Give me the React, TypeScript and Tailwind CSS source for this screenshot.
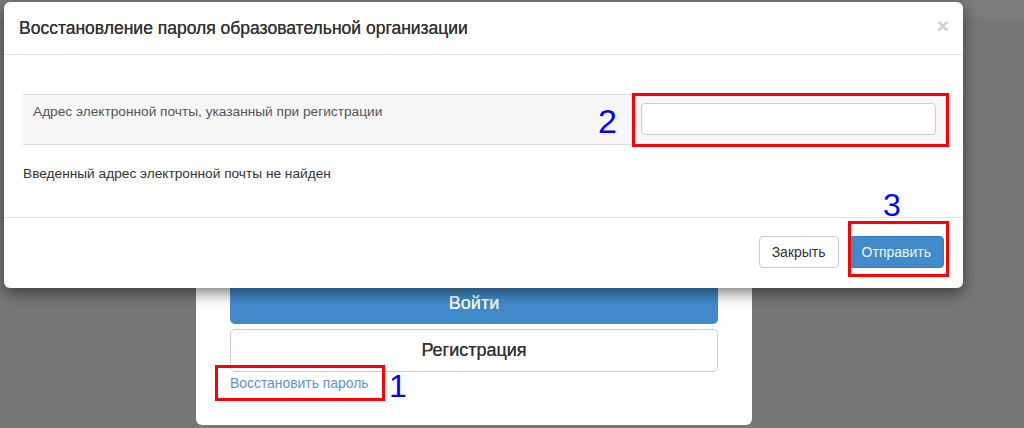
import React from "react";

const FONT = { fontFamily: '"Liberation Sans", Arial, sans-serif' };

function Annotation({ className }: { className: string }) {
  return <div className={`absolute border-[3px] border-[#ff0000] ${className}`} />;
}

function Digit({ n, className }: { n: string; className: string }) {
  return (
    <div className={`absolute leading-none text-[#0000ff] ${className}`}>{n}</div>
  );
}

function LoginCard() {
  return (
    <div className="w-[556px] rounded-[6px] bg-white pt-[83px] pb-[33px] px-[34px]">
      <button className="flex h-[42px] w-full items-center justify-center rounded-b-[5px] bg-[#428bca] text-[18px] text-white [text-shadow:0_0_0.6px_#fff]">
        Войти
      </button>
      <button className="mt-[5px] flex h-[43px] w-full items-center justify-center rounded-[5px] border border-[#ccc] bg-white text-[18px] text-[#333] [text-shadow:0_0_0.6px_#333]">
        Регистрация
      </button>
      <a className="mt-[2px] block text-[13.9px] leading-[18px] text-[#5b95d4]">
        Восстановить пароль
      </a>
    </div>
  );
}

function RecoveryModal() {
  return (
    <div className="absolute left-[4px] top-[2px] flex w-[959px] flex-col rounded-[6px] bg-white shadow-[0_5px_15px_rgba(0,0,0,0.5)]">
      {/* header */}
      <div className="flex h-[53px] items-center justify-between border-b border-[#e5e5e5] pl-[15px] pr-[14px]">
        <h4 className="text-[17.5px] text-[#333] [text-shadow:0_0_0.5px_#333]">
          Восстановление пароля образовательной организации
        </h4>
        <span className="-mt-[6px] text-[21px] font-bold leading-none text-[#cfcfcf]">×</span>
      </div>

      {/* body */}
      <div className="pl-[19px] pr-[17px] pt-[39px] pb-[34px]">
        <div className="flex h-[51px] border-y border-r border-[#ddd] bg-[#f7f7f7]">
          <div className="flex-1 pl-[10px] pt-[8px] text-[13.7px] leading-[18px] text-[#555]">
            Адрес электронной почты, указанный при регистрации
          </div>
          <div className="w-[313px] pl-[9px] pr-[9px] pt-[8px]">
            <input
              className="h-[32px] w-full rounded-[4px] border border-[#ccc] bg-white"
              type="text"
            />
          </div>
        </div>
        <p className="mt-[20px] text-[13.7px] leading-[18px] text-[#333]">
          Введенный адрес электронной почты не найден
        </p>
      </div>

      {/* footer */}
      <div className="flex h-[71px] items-start justify-end gap-[10px] border-t border-[#e5e5e5] pr-[19px] pt-[18px]">
        <button className="h-[32px] rounded-[4px] border border-[#ccc] bg-white px-[12px] text-[14px] text-[#333]">
          Закрыть
        </button>
        <button className="h-[32px] rounded-[4px] border border-[#357ebd] bg-[#428bca] px-[12px] text-[14px] text-[#f2f6fb]">
          Отправить
        </button>
      </div>
    </div>
  );
}

export default function App() {
  return (
    <div className="relative h-[428px] w-[1024px] overflow-hidden bg-[#777]" style={FONT}>
      <div className="h-[21px] border-b border-[#737373] bg-[#7b7b7b]" />
      <div className="pl-[196px] pt-[178px]">
        <LoginCard />
      </div>

      <RecoveryModal />

      <Annotation className="left-[632px] top-[93px] h-[54px] w-[317px]" />
      <Annotation className="left-[848px] top-[221px] h-[56px] w-[101px]" />
      <Annotation className="left-[215px] top-[365px] h-[36px] w-[170px]" />

      <Digit n="2" className="left-[598px] top-[104px] text-[34px]" />
      <Digit n="3" className="left-[883px] top-[189px] text-[32px]" />
      <Digit n="1" className="left-[389px] top-[370px] text-[32px]" />
    </div>
  );
}
